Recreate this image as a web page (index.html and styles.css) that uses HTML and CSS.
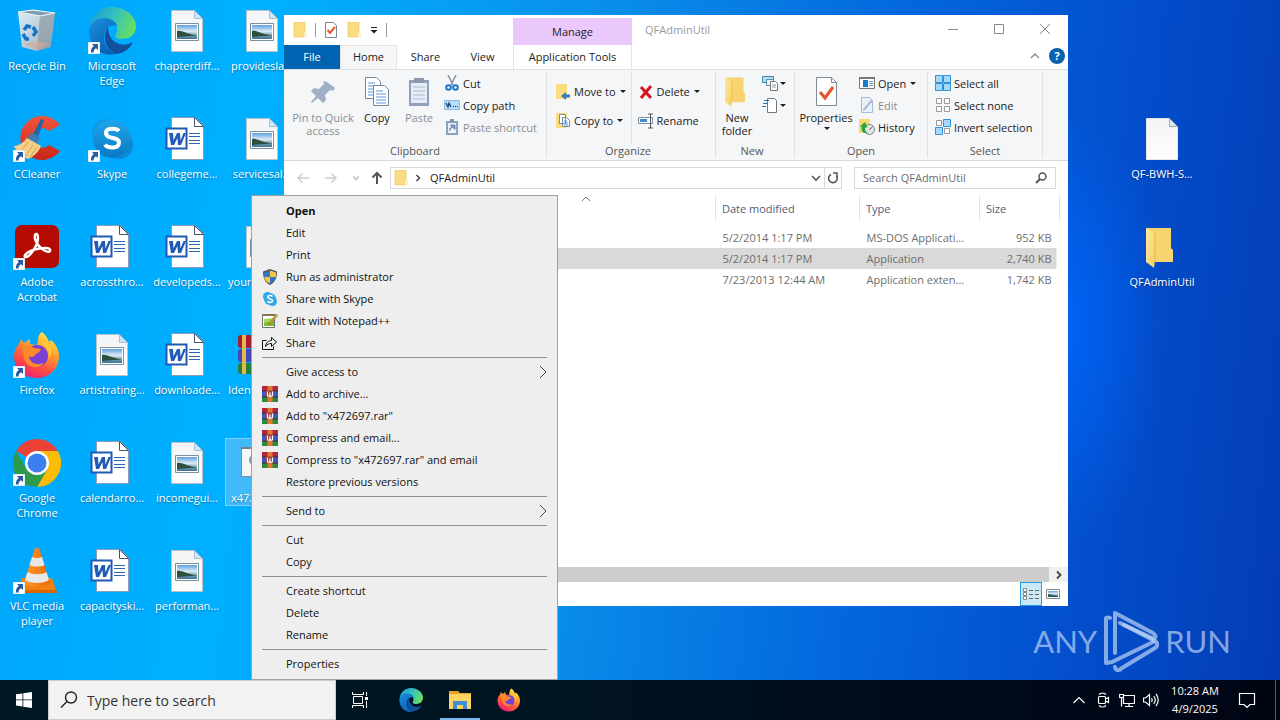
FILE: index.html
```html
<!DOCTYPE html>
<html lang="en">
<head>
    <meta charset="UTF-8">
    <title>QFAdminUtil</title>
    <meta name="viewport" content="width=device-width, initial-scale=1.0">
    <link rel="stylesheet" href="styles.css">
</head>
<body>

    <!-- Shared icons -->
    <svg class="sprite" aria-hidden="true">
        <defs>
            <linearGradient id="gEdgeTop" x1="0" y1="0.3" x2="1" y2="0.6"><stop offset="0" stop-color="#1a9fd8"/><stop offset=".5" stop-color="#35c1bd"/><stop offset="1" stop-color="#6be05c"/></linearGradient>
            <linearGradient id="gEdgeLeft" x1="0" y1="0" x2=".6" y2="1"><stop offset="0" stop-color="#1a8fdc"/><stop offset="1" stop-color="#0b60b8"/></linearGradient>
            <linearGradient id="gPage" x1="0" y1="0" x2="0" y2="1"><stop offset="0" stop-color="#f3f4f5"/><stop offset="1" stop-color="#fdfdfd"/></linearGradient>
            <linearGradient id="gSky" x1="0" y1="0" x2="0" y2="1"><stop offset="0" stop-color="#5f9fe0"/><stop offset=".45" stop-color="#dcecf6"/><stop offset=".7" stop-color="#7fa9b0"/><stop offset="1" stop-color="#3a6f9c"/></linearGradient>
            <linearGradient id="gFolder" x1="0" y1="0" x2="1" y2="1"><stop offset="0" stop-color="#ffe9a0"/><stop offset="1" stop-color="#f6cf66"/></linearGradient>
            <linearGradient id="gBin" x1="0" y1="0" x2="1" y2="1"><stop offset="0" stop-color="#eef2f5"/><stop offset="1" stop-color="#a9b3bb"/></linearGradient>
            <linearGradient id="gSkype" x1="0" y1="0" x2="0" y2="1"><stop offset="0" stop-color="#1fa6ec"/><stop offset="1" stop-color="#0a78c4"/></linearGradient>
            <linearGradient id="gFox" x1=".8" y1="0" x2=".3" y2="1"><stop offset="0" stop-color="#fff04a"/><stop offset=".35" stop-color="#ffa42a"/><stop offset=".7" stop-color="#ff4f40"/><stop offset="1" stop-color="#ec1c78"/></linearGradient>
            <linearGradient id="gCone" x1="0" y1="0" x2="1" y2="0"><stop offset="0" stop-color="#ff9a2e"/><stop offset="1" stop-color="#ea6b00"/></linearGradient>
            <linearGradient id="gRed" x1="0" y1="0" x2="0" y2="1"><stop offset="0" stop-color="#f0553c"/><stop offset="1" stop-color="#c9261a"/></linearGradient>
        </defs>

        <symbol id="shortcut" viewBox="0 0 12 12">
            <path d="M0 0h12v12H0z" fill="#fff" stroke="#9ec3dc" stroke-width=".6"/>
            <path d="M4 2h6v6L8 6.200C6.500 7 5.500 8.500 5.500 10.500H3C2.600 7.500 3.800 5.300 5.800 4z" fill="#2a5b9d"/>
        </symbol>

        <symbol id="bin" viewBox="0 0 48 48">
            <path d="M5 5l15-2L42 6l-4.500 34-14 4L9 40z" fill="url(#gBin)" opacity=".92"/>
            <path d="M27 9l15-3-4.500 34-14 4z" fill="#8f9ba4" opacity=".7"/>
            <path d="M5 5l15-2L42 6l-15 3z" fill="#7fa0b2" stroke="#f3f6f8" stroke-width="1.200"/>
            <path d="M11 37l12-3 13 3-12.500 6z" fill="#d9a98f" opacity=".6"/>
            <g fill="none" stroke="#1773c8" stroke-width="3.500"><path d="M11 23l3-4 4 1"/><path d="M20 20l3 5-3 4"/><path d="M16 32h-3l-3-5"/></g>
        </symbol>

        <symbol id="edge" viewBox="0 0 48 48">
            <path d="M1 24C1 10 11 0 24 0s24 9 24 19c0 9-7 13-14 13-6 0-8-2-6-5 1-2 1-3 1-5 0-6-6-10-12-10C9 12 2 17 1 24z" fill="url(#gEdgeTop)"/>
            <path d="M1 22c2-7 9-11 15-11 6 0 12 3 13 8-5-2-10 1-12 6-3 8 1 18 11 22C13 51 0 39 1 22z" fill="url(#gEdgeLeft)"/>
            <path d="M20 20c-6 9-3 22 8 27 8-1 13-5 16-10 1-2 0-2-1-1-10 5-23-1-23-16z" fill="#124f9c"/>
        </symbol>

        <symbol id="picture" viewBox="0 0 48 48">
            <path d="M8.500 3.500h23l8 8v33h-31z" fill="url(#gPage)" stroke="#b9c3ca"/>
            <path d="M31.500 3.500v8h8z" fill="#cfe6f5" stroke="#9db4c4" stroke-width=".8"/>
            <path d="M12.500 16.500h23v17h-23z" fill="#fff" stroke="#7c8f9c"/>
            <path d="M14 18h20v14H14z" fill="url(#gSky)"/>
            <path d="M14 24c5-1 8 3 20 4.500L14 30z" fill="#2e4f3d"/>
        </symbol>

        <symbol id="word" viewBox="0 0 48 48">
            <path d="M8.500 2.500h24l8 8v34h-32z" fill="#fff" stroke="#8b9db5"/>
            <path d="M31.500 2.500v9h9z" fill="#fff" stroke="#44546a"/>
            <path d="M26 18.500h11M26 21.500h11M26 25.500h11M26 28.500h11" stroke="#2b66b5" stroke-width="1.200"/>
            <path d="M3.500 13.500h20v20h-20z" fill="#fff" stroke="#1f5bb5" stroke-width="2"/>
            <path d="M6 18h4l.500 7.500L14 18h3l.500 7.500L20.500 18H23l-5 12h-3l-.600-7-3.400 7H8z" fill="#1f5bb5"/>
        </symbol>

        <symbol id="ccleaner" viewBox="0 0 48 48">
            <path d="M47 10A22 22 0 1 0 47 36l-11-6a10 10 0 1 1 0-14z" fill="url(#gRed)"/>
            <path d="M28 4l3 1-7 20-6-2z" fill="#28649f"/>
            <path d="M18 18l9 4-3 9-10-6z" fill="#3d7db5"/>
            <path d="M14 23l14 8c-2 6-8 11-13 13C10 42 3 36 1 31c5 0 10-4 13-8z" fill="#f5ce86"/>
            <path d="M15 27l-7 9M20 30l-7 11M24 32l-7 10" stroke="#d8a24c" fill="none"/>
        </symbol>

        <symbol id="skype" viewBox="0 0 48 48">
            <circle cx="18" cy="18" r="14" fill="#1593dd" opacity=".7"/><circle cx="31" cy="30" r="14" fill="#1279c6" opacity=".7"/>
            <circle cx="24" cy="24" r="19" fill="url(#gSkype)"/>
            <path d="M31 16c-2-2.500-13-4-13 2 0 7 13 3 13 9.500 0 7-12 5.500-14 2" fill="none" stroke="#fff" stroke-width="4"/>
        </symbol>

        <symbol id="acrobat" viewBox="0 0 48 48">
            <rect x="2" y="2" width="44" height="43" rx="7" fill="#b30b00"/>
            <path d="M13 34c-4 0 1-6 11-8s14-1 13 2c-2 3-12-3-15-12-1-6 3-7 3-1 0 7-8 19-12 19z" fill="none" stroke="#fff" stroke-width="2.400"/>
        </symbol>

        <symbol id="firefox" viewBox="0 0 48 48">
            <path d="M29 1c4 3 6 7 7 10l2-2c5 4 8 10 8 16 0 12-9 22-22 22S1 38 1 25c0-5 2-9 5-12l2-5 3 4 6-4v5l7 1 1-5c0-4 2-7 4-8z" fill="url(#gFox)"/>
            <circle cx="24" cy="25" r="11" fill="#7a3fd3"/>
            <path d="M9 14c5-1 9 1 12 3l7 1c-1 4-5 4-6 6-2 3-5 2-6 1 0 7 8 10 15 7-6 8-18 4-20-5-1-5 0-8-2-13z" fill="#ff8a2b"/>
            <path d="M28 13c8 3 9 11 7 16 6-7 3-16-2-20 0 2-2 3-5 4z" fill="#ffc63a"/>
        </symbol>

        <symbol id="chrome" viewBox="0 0 48 48">
            <path d="M24 24L3.200 12A24 24 0 0 1 44.800 12z" fill="#ea4335"/>
            <path d="M24 12h20.800A24 24 0 0 1 24 48l10.400-18z" fill="#fbbc05"/>
            <path d="M3.200 12A24 24 0 0 0 24 48l10.400-18L24 24 13.600 30z" fill="#2e9b4b"/>
            <circle cx="24" cy="24" r="12" fill="#fff"/><circle cx="24" cy="24" r="9.500" fill="#3c7ff0"/>
        </symbol>

        <symbol id="vlc" viewBox="0 0 48 48">
            <path d="M9 31h30l5 15H4z" fill="#f08010"/><path d="M5 43h38l1 3H4z" fill="#d96400"/>
            <path d="M22 1h4l11 35c-3 5-23 5-26 0z" fill="url(#gCone)"/>
            <path d="M19 10c3 1.500 7 1.500 10 0l2.500 8c-4 2-11 2-15 0zM14.500 25c5 3 14 3 19 0l2.500 8c-6 4-18 4-24 0z" fill="#e8e8e8"/>
        </symbol>

        <symbol id="folder" viewBox="0 0 48 48">
            <path d="M8 5h25v20l2 2v12H8z" fill="#f7d46f"/>
            <path d="M8 5l8 5v35l-8-6z" fill="url(#gFolder)"/>
            <path d="M16 10l2 1v26l-2 8z" fill="#e9bd4f" opacity=".6"/>
        </symbol>

        <symbol id="blank" viewBox="0 0 48 48">
            <path d="M8.500 3.500h23l8 8v33h-31z" fill="url(#gPage)" stroke="#e6e6e6"/>
            <path d="M31.500 3.500v8h8z" fill="#e3e7ea" stroke="#8a98a4" stroke-width=".8"/>
        </symbol>

        <symbol id="rar" viewBox="0 0 16 16">
            <path d="M0 0h16v5H0z" fill="#b5243f"/><path d="M0 5h16v6H0z" fill="#3d56b8"/><path d="M0 11h16v5H0z" fill="#2c8a3c"/>
            <path d="M0 5h16M0 11h16" stroke="#3d2f3a"/>
            <path d="M5.500 0h5v16h-5z" fill="#e0792b"/>
            <path d="M4 4.500h8v6.500H4z" fill="#9d3f48"/><path d="M5.500 5.500V9a1.200 1.200 0 0 0 2.500 0V6.500V9a1.200 1.200 0 0 0 2.500 0V5.500" fill="none" stroke="#fff" stroke-width="1.200"/>
        </symbol>

        <symbol id="books" viewBox="0 0 48 48">
            <rect x="0" y="4" width="47" height="13" rx="3" fill="#a81c35"/><rect x="0" y="18" width="47" height="13" rx="3" fill="#4547b8"/><rect x="0" y="32" width="47" height="11" rx="3" fill="#24803a"/>
            <path d="M4 4h4v39H4z" fill="#e3b94b"/>
        </symbol>

        <symbol id="smallFolder" viewBox="0 0 16 16">
            <path d="M2 0h11v10l1 1v4H2z" fill="#fbdc80" stroke="#eac25c" stroke-width=".6"/><path d="M12 10l2 1v4h-2z" fill="#fff3c4"/>
        </symbol>
        <symbol id="checkPage" viewBox="0 0 16 16">
            <path d="M2.500.500h8l3 3v12h-11z" fill="#fff" stroke="#7d8794"/><path d="M4.500 8l2.500 3 5-6" fill="none" stroke="#e25a2c" stroke-width="2"/>
        </symbol>
        <symbol id="chevron" viewBox="0 0 10 10"><path d="M1 3l4 4 4-4" fill="none" stroke="currentColor" stroke-width="1.600"/></symbol>
    </svg>

    <main class="desktop">
        <div class="icons">
            <button class="icon"><svg><use href="#bin"/></svg><span>Recycle Bin</span></button>
            <button class="icon app"><svg><use href="#edge"/></svg><svg class="arrow"><use href="#shortcut"/></svg><span>Microsoft Edge</span></button>
            <button class="icon"><svg><use href="#picture"/></svg><span>chapterdiff...</span></button>
            <button class="icon"><svg><use href="#picture"/></svg><span>providesla...</span></button>

            <button class="icon app first"><svg><use href="#ccleaner"/></svg><svg class="arrow"><use href="#shortcut"/></svg><span>CCleaner</span></button>
            <button class="icon app"><svg><use href="#skype"/></svg><svg class="arrow"><use href="#shortcut"/></svg><span>Skype</span></button>
            <button class="icon"><svg><use href="#word"/></svg><span>collegeme...</span></button>
            <button class="icon"><svg><use href="#picture"/></svg><span>servicesal...</span></button>
            <button class="icon far"><svg><use href="#blank"/></svg><span>QF-BWH-S...</span></button>

            <button class="icon app first"><svg><use href="#acrobat"/></svg><svg class="arrow"><use href="#shortcut"/></svg><span>Adobe Acrobat</span></button>
            <button class="icon"><svg><use href="#word"/></svg><span>acrossthro...</span></button>
            <button class="icon"><svg><use href="#word"/></svg><span>developeds...</span></button>
            <button class="icon covered"><svg><use href="#picture"/></svg><span>your</span></button>
            <button class="icon far"><svg><use href="#folder"/></svg><span>QFAdminUtil</span></button>

            <button class="icon app first"><svg><use href="#firefox"/></svg><svg class="arrow"><use href="#shortcut"/></svg><span>Firefox</span></button>
            <button class="icon"><svg><use href="#picture"/></svg><span>artistrating...</span></button>
            <button class="icon"><svg><use href="#word"/></svg><span>downloade...</span></button>
            <button class="icon covered"><svg><use href="#books"/></svg><span>Iden</span></button>

            <button class="icon app first"><svg><use href="#chrome"/></svg><svg class="arrow"><use href="#shortcut"/></svg><span>Google Chrome</span></button>
            <button class="icon"><svg><use href="#word"/></svg><span>calendarro...</span></button>
            <button class="icon"><svg><use href="#picture"/></svg><span>incomegui...</span></button>
            <button class="icon covered selected">
                <svg viewBox="0 0 48 48"><path d="M3.500 8.500h41v29h-41z" fill="#f7f7f7" stroke="#7d8c99"/><path d="M3 8h42v2H3z" fill="#73808c"/><circle cx="17" cy="21" r="5" fill="none" stroke="#8b98a3" stroke-width="2"/></svg>
                <span>x472697</span>
            </button>

            <button class="icon app first"><svg><use href="#vlc"/></svg><svg class="arrow"><use href="#shortcut"/></svg><span>VLC media player</span></button>
            <button class="icon"><svg><use href="#word"/></svg><span>capacityski...</span></button>
            <button class="icon"><svg><use href="#picture"/></svg><span>performan...</span></button>
        </div>

        <div class="watermark">
            <span>ANY</span>
            <svg viewBox="0 0 56 62" fill="none" stroke="currentColor" stroke-width="4" stroke-linejoin="round" stroke-linecap="round">
                <path d="M7 8a4 4 0 0 0-4 0v45l6-1 41-20"/><path d="M12 43V3l38 20c4 3 3 6-1 5L17 13"/><path d="M12 57c1 4 4 4 7 1l33-20c3-2 3-5 0-7L21 15"/>
            </svg>
            <span>RUN</span>
        </div>

        <section class="window">
            <header class="titlebar">
                <div class="quick">
                    <svg class="s16"><use href="#smallFolder"/></svg><i></i>
                    <button aria-label="Properties"><svg class="s16"><use href="#checkPage"/></svg></button>
                    <button aria-label="New folder"><svg class="s16"><use href="#smallFolder"/></svg></button>
                    <button aria-label="Customize toolbar"><svg viewBox="0 0 10 10" class="s10"><path d="M2 2.500h6" stroke="#222"/><path d="M1.500 5h7L5 8.500z" fill="#222"/></svg></button><i></i>
                </div>
                <div class="manage">Manage</div>
                <div class="title">QFAdminUtil</div>
                <div class="controls">
                    <button aria-label="Minimize"><svg viewBox="0 0 12 12"><path d="M1 6.500h10"/></svg></button>
                    <button aria-label="Maximize"><svg viewBox="0 0 12 12"><path d="M1.500 1.500h9v9h-9z"/></svg></button>
                    <button aria-label="Close"><svg viewBox="0 0 12 12"><path d="M1 1l10 10M11 1L1 11"/></svg></button>
                </div>
            </header>

            <nav class="tabs">
                <button class="file">File</button>
                <button class="active">Home</button>
                <button>Share</button>
                <button>View</button>
                <button class="tools">Application Tools</button>
                <button class="collapse" aria-label="Collapse ribbon"><svg viewBox="0 0 10 10" class="s10"><path d="M1 7l4-4 4 4" fill="none" stroke="#888" stroke-width="1.300"/></svg></button>
                <button class="help" aria-label="Help">?</button>
            </nav>

            <div class="ribbon">
                <div class="group clipboard">
                    <div class="tools-row">
                        <button class="big pin off"><svg viewBox="0 0 32 32"><path d="M20 6l8 6-2 3-3-1-5 5 1 5-3 3-5-5-6 5-1-1 5-6-5-5 3-3 5 1 5-5-1-3z" fill="#9fb0c6"/></svg>Pin to Quick access</button>
                        <button class="big copy"><svg viewBox="0 0 32 32"><g fill="#fff" stroke="#76879c"><path d="M4.500 1.500h11l4 4v17h-15z"/><path d="M12.500 9.500h11l4 4v16h-15z"/></g><path d="M7 7h7M7 10h5M7 13h5M7 16h5M7 19h5M15 15h7M15 18h10M15 21h10M15 24h10M15 27h10" stroke="#5a9be0"/></svg>Copy</button>
                        <button class="big paste off"><svg viewBox="0 0 32 32"><path d="M6 4h20v26H6z" fill="#8ea0bd"/><path d="M8 7h16v20H8z" fill="#e6ecf6"/><path d="M11 2h10v5H11z" fill="#8b97a8"/><path d="M10 11h12M10 15h12M10 19h12M10 23h12" stroke="#aebcd2"/></svg>Paste</button>
                        <div class="list">
                            <button><svg viewBox="0 0 16 16"><path d="M4 0l5 10M12 0L7 10" stroke="#8592a2" stroke-width="1.500"/><g fill="none" stroke="#1b78c8" stroke-width="2"><circle cx="4.500" cy="12.500" r="2.300"/><circle cx="11.500" cy="12.500" r="2.300"/></g></svg>Cut</button>
                            <button><svg viewBox="0 0 16 16"><path d="M.500 3.500h15v9H.500z" fill="#b8dcfa" stroke="#8abde8"/><path d="M2 6l2 4 1-4 2 4M9 9.500h1M11 9.500h1M13 9.500h1" fill="none" stroke="#15416e" stroke-width="1.200"/></svg>Copy path</button>
                            <button class="off"><svg viewBox="0 0 16 16"><path d="M2 2h12v14H2z" fill="#8da2c0"/><path d="M4 4h8v10H4z" fill="#eef3fa"/><path d="M6 0h4v3H6z" fill="#8793a5"/><path d="M5.500 12c0-3 1-4 3-4M6.500 6h4.500v4.500z" stroke="#6e8cb5" fill="#6e8cb5"/></svg>Paste shortcut</button>
                        </div>
                    </div>
                    <div class="caption">Clipboard</div>
                </div>

                <div class="group organize">
                    <div class="tools-row">
                        <div class="list roomy">
                            <button><svg viewBox="0 0 16 16"><path d="M1 0h11v9l1 1v5H1z" fill="#fbdc80"/><path d="M15 10.500h-4V8l-5 4 5 4v-2.500h4z" fill="#2d7cc4"/></svg>Move to<b></b></button>
                            <button><svg viewBox="0 0 16 16"><path d="M1 0h11v15H1z" fill="#fbdc80"/><path d="M4.500 1.500h6v9h-6zM7.500 4.500h4l3 3v6h-7z" fill="#fff" stroke="#7889a0"/><path d="M9 8h3M9 10h4M9 12h4" stroke="#4e93d8"/></svg>Copy to<b></b></button>
                        </div>
                        <div class="list roomy split">
                            <button><svg viewBox="0 0 16 16"><path d="M3 3l10 11M13 2L3 14" stroke="#d8151c" stroke-width="3"/></svg>Delete<b></b></button>
                            <button><svg viewBox="0 0 16 16"><path d="M.500 4.500h14v6H.500z" fill="#fff" stroke="#7f93a8"/><path d="M2 6h7v3H2z" fill="#3a8ed8"/><path d="M10 1h2.500H15M12.500 1v14M10 15h5" fill="none" stroke="#555"/></svg>Rename</button>
                        </div>
                    </div>
                    <div class="caption">Organize</div>
                </div>

                <div class="group new">
                    <div class="tools-row">
                        <button class="big folder"><svg viewBox="6 3 36 44"><use href="#folder" width="48" height="48"/></svg>New folder</button>
                        <div class="list icon-only">
                            <button aria-label="New item"><svg viewBox="0 0 16 16"><path d="M.500 1.500h11v6H.500z" fill="#b8dcf4" stroke="#3f86b0"/><path d="M4.500 4.500h7v6h-7z" fill="#e9f3fa" stroke="#5e8eac"/><path d="M8.500 6.500h5l2 2v7h-7z" fill="#fff" stroke="#777"/><path d="M10 10h4M10 12h4" stroke="#999"/></svg><b></b></button>
                            <button aria-label="Easy access"><svg viewBox="0 0 16 16"><path d="M5.500 1.500h7l2 2v12h-9z" fill="#fff" stroke="#777"/><path d="M2 3.500h5M1 6.500h5M0 9.500h4" stroke="#2b78bd"/></svg><b></b></button>
                        </div>
                    </div>
                    <div class="caption">New</div>
                </div>

                <div class="group open">
                    <div class="tools-row">
                        <button class="big props"><svg viewBox="0 0 32 32"><path d="M6.500 1.500h15l5 5v23h-20z" fill="#fff" stroke="#808a98"/><path d="M21.500 1.500v5h5" fill="none" stroke="#808a98"/><path d="M10 16l5 6 8-11" fill="none" stroke="#e2562c" stroke-width="3"/></svg>Properties<b></b></button>
                        <div class="list">
                            <button><svg viewBox="0 0 16 16"><path d="M.500 2.500h15v11H.500z" fill="#fff" stroke="#777"/><path d="M0 2h16v2H0z" fill="#777"/><path d="M4 5h5v7H4z" fill="#1979ca"/><path d="M10 6.500h4M10 8.500h4M10 10.500h4" stroke="#6d9fc8"/></svg>Open<b></b></button>
                            <button class="off"><svg viewBox="0 0 16 16"><path d="M2.500.500h8l3 3v12h-11z" fill="#eaf0f8" stroke="#a7b7cf"/><path d="M14 4l-8 9-2 1 .500-2.500L12 3z" fill="#aabbd6"/></svg>Edit</button>
                            <button><svg viewBox="0 0 16 16"><path d="M0 0h11v14H0z" fill="#f8d96c"/><circle cx="10.500" cy="10.500" r="5" fill="#e3e6e4" stroke="#7b858a"/><path d="M10.500 10.500l3-2.500" fill="none" stroke="#555"/><path d="M9 14C4 15 1.500 11.500 3 8L1 7.500 6 3l2.500 5.500L6 8.500C5.500 11 6.500 13 9 14z" fill="#27a54a"/></svg>History</button>
                        </div>
                    </div>
                    <div class="caption">Open</div>
                </div>

                <div class="group select">
                    <div class="tools-row">
                        <div class="list">
                            <button><svg viewBox="0 0 16 16"><path d="M.500.500h7v7h-7zM8.500.500h7v7h-7zM.500 8.500h7v7h-7zM8.500 8.500h7v7h-7z" fill="#a6d8fa" stroke="#2f93dc"/></svg>Select all</button>
                            <button><svg viewBox="0 0 16 16"><path d="M1.500 1.500h5v5h-5zM9.500 1.500h5v5h-5zM1.500 9.500h5v5h-5zM9.500 9.500h5v5h-5z" fill="#fff" stroke="#999"/></svg>Select none</button>
                            <button><svg viewBox="0 0 16 16"><path d="M1.500 1.500h5v5h-5zM9.500 9.500h5v5h-5z" fill="#fff" stroke="#999"/><path d="M8.500.500h7v7h-7zM.500 8.500h7v7h-7z" fill="#a6d8fa" stroke="#2f93dc"/></svg>Invert selection</button>
                        </div>
                    </div>
                    <div class="caption">Select</div>
                </div>
            </div>

            <div class="address-row">
                <div class="nav">
                    <button aria-label="Back"><svg viewBox="0 0 14 14"><path d="M13 7H2M6.500 2.500L2 7l4.500 4.500"/></svg></button>
                    <button aria-label="Forward"><svg viewBox="0 0 14 14"><path d="M1 7h11M7.500 2.500L12 7l-4.500 4.500"/></svg></button>
                    <button aria-label="Recent"><svg class="s10" viewBox="0 0 10 10"><path d="M3 4l2 2 2-2"/></svg></button>
                    <button class="up" aria-label="Up"><svg viewBox="0 0 14 14"><path d="M7 13V2M2.500 6.500L7 2l4.500 4.500"/></svg></button>
                </div>
                <div class="address">
                    <svg class="s16"><use href="#smallFolder"/></svg>
                    <svg class="crumb" viewBox="0 0 6 8"><path d="M1.500 1l3 3-3 3" fill="none" stroke="#444" stroke-width="1.500"/></svg>
                    <span>QFAdminUtil</span>
                    <button aria-label="Previous locations"><svg class="s10"><use href="#chevron"/></svg></button>
                    <button class="refresh" aria-label="Refresh"><svg viewBox="0 0 12 12" class="s12"><path d="M4 2.500A4.300 4.300 0 1 0 9.500 4" fill="none" stroke="#555" stroke-width="1.600"/><path d="M6 1h4v4" fill="none" stroke="#555" stroke-width="1.500"/></svg></button>
                </div>
                <div class="search">
                    <input type="text" placeholder="Search QFAdminUtil" aria-label="Search QFAdminUtil">
                    <svg viewBox="0 0 12 12" class="s12"><circle cx="7.500" cy="4.500" r="3.500" fill="none" stroke="#555" stroke-width="1.500"/><path d="M5 7l-4 4" stroke="#555" stroke-width="2"/></svg>
                </div>
            </div>

            <div class="files">
                <svg class="sort s10" viewBox="0 0 10 10"><path d="M1 7l4-4 4 4" fill="none" stroke="#777"/></svg>
                <table>
                    <colgroup><col><col class="c-date"><col class="c-type"><col class="c-size"></colgroup>
                    <thead>
                        <tr><td></td><th>Date modified</th><th>Type</th><th>Size</th></tr>
                    </thead>
                    <tbody>
                        <tr><td></td><td>5/2/2014 1:17 PM</td><td>MS-DOS Applicati...</td><td>952 KB</td></tr>
                        <tr class="current"><td></td><td>5/2/2014 1:17 PM</td><td>Application</td><td>2,740 KB</td></tr>
                        <tr><td></td><td>7/23/2013 12:44 AM</td><td>Application exten...</td><td>1,742 KB</td></tr>
                    </tbody>
                </table>
            </div>

            <div class="scrollbar"><div class="thumb"></div><button aria-label="Scroll right"><svg class="s10" viewBox="0 0 10 10"><path d="M3 1.500L6.500 5 3 8.500" fill="none" stroke="#444" stroke-width="1.800"/></svg></button></div>

            <footer class="status">
                <button class="on" aria-label="Details view"><svg viewBox="0 0 16 14"><path d="M.500 1.500h3v3h-3zM.500 5.500h3v3h-3zM.500 9.500h3v3h-3z" fill="#fff" stroke="#888"/><path d="M6 3.500h4M12 3.500h4M6 7.500h4M12 7.500h4M6 11.500h4M12 11.500h4" stroke="#666"/></svg></button>
                <button aria-label="Large icons view"><svg viewBox="0 0 16 14"><path d="M1.500 2.500h13v9h-13z" fill="#fff" stroke="#888"/><path d="M3 4h10v6H3z" fill="url(#gSky)"/><path d="M3 7l10 2v1H3z" fill="#2b5560"/></svg></button>
            </footer>
        </section>

        <div class="menu" role="menu">
            <button role="menuitem" class="default"><i></i><span>Open</span></button>
            <button role="menuitem"><i></i><span>Edit</span></button>
            <button role="menuitem"><i></i><span>Print</span></button>
            <button role="menuitem"><i><svg viewBox="0 0 16 16"><path d="M8 0l7 2.500C15 9 13 13.500 8 16 3 13.500 1 9 1 2.500z" fill="#555"/><path d="M8 1.500V8H2.200C2 6.500 2 5 2 3.500z" fill="#2f78c4"/><path d="M8 1.500l6 2C14 5 14 6.500 13.800 8H8z" fill="#f5c944"/><path d="M2.200 8H8v6.500C4.500 13 2.800 11 2.200 8z" fill="#f5c944"/><path d="M8 8h5.800c-.600 3-2.300 5-5.800 6.500z" fill="#2f78c4"/></svg></i><span>Run as administrator</span></button>
            <button role="menuitem"><i><svg viewBox="0 0 16 16"><circle cx="5.500" cy="5.500" r="4.500" fill="#2fa9e8"/><circle cx="10.500" cy="10.500" r="4.500" fill="#2fa9e8"/><circle cx="8" cy="8" r="6" fill="#2fa9e8"/><path d="M10.500 5.500c-1-1.300-4.800-1.300-4.800.600 0 2.400 4.800 1.200 4.800 3.700 0 2.200-4.200 2-5 .400" fill="none" stroke="#fff" stroke-width="1.500"/></svg></i><span>Share with Skype</span></button>
            <button role="menuitem"><i><svg viewBox="0 0 16 16"><path d="M.500 1.500h12v13H.500z" fill="#fff" stroke="#6b756b"/><path d="M1 1h11v2H1z" fill="#8c6f4d"/><path d="M2 6l10-1v8H2z" fill="#a4d65a"/><path d="M2 10l10-3v6H2z" fill="#7cbf2c"/><path d="M14 1l1.500 1.500L9 11l-2 1 .500-2z" fill="#d8a53c" stroke="#7a5a2a" stroke-width=".5"/></svg></i><span>Edit with Notepad++</span></button>
            <button role="menuitem"><i><svg viewBox="0 0 16 16"><path d="M4.500 5.500h-4v9h11v-3M3.500 11.500c.500-4 3-6 6-6v-3l5 4.500-5 4.500V8.500c-3 0-4.500 1-6 3z" fill="none" stroke="#111"/></svg></i><span>Share</span></button>
            <hr>
            <button role="menuitem"><i></i><span>Give access to</span><svg class="more" viewBox="0 0 8 14"><path d="M1 1l6 6-6 6"/></svg></button>
            <button role="menuitem"><i><svg><use href="#rar"/></svg></i><span>Add to archive...</span></button>
            <button role="menuitem"><i><svg><use href="#rar"/></svg></i><span>Add to "x472697.rar"</span></button>
            <button role="menuitem"><i><svg><use href="#rar"/></svg></i><span>Compress and email...</span></button>
            <button role="menuitem"><i><svg><use href="#rar"/></svg></i><span>Compress to "x472697.rar" and email</span></button>
            <button role="menuitem"><i></i><span>Restore previous versions</span></button>
            <hr>
            <button role="menuitem"><i></i><span>Send to</span><svg class="more" viewBox="0 0 8 14"><path d="M1 1l6 6-6 6"/></svg></button>
            <hr>
            <button role="menuitem"><i></i><span>Cut</span></button>
            <button role="menuitem"><i></i><span>Copy</span></button>
            <hr>
            <button role="menuitem"><i></i><span>Create shortcut</span></button>
            <button role="menuitem"><i></i><span>Delete</span></button>
            <button role="menuitem"><i></i><span>Rename</span></button>
            <hr>
            <button role="menuitem"><i></i><span>Properties</span></button>
        </div>
    </main>

    <footer class="taskbar">
        <button class="start" aria-label="Start"><svg viewBox="0 0 16 16"><path d="M0 2.300L6.500 1.400v6.100H0zM7.300 1.300L16 0v7.500H7.300zM0 8.300h6.500v6.200L0 13.600zM7.300 8.300H16V16l-8.700-1.300z" fill="#fff"/></svg></button>
        <div class="task-search">
            <svg viewBox="0 0 18 18"><circle cx="11" cy="6.500" r="5.500" fill="none" stroke="#222" stroke-width="1.400"/><path d="M7 10.500l-6 6" stroke="#222" stroke-width="1.400"/></svg>
            <input type="text" placeholder="Type here to search" aria-label="Type here to search">
        </div>
        <div class="apps">
            <button aria-label="Task view"><svg class="view" viewBox="0 0 18 16"><path d="M2.500 4.500h9v7h-9zM1.500 0v2.500h11V0M1.500 16v-2.500h11V16M15.500 0v4M15.500 9v7" fill="none" stroke="#fff"/><path d="M14 5h3v3h-3z" fill="#fff"/></svg></button>
            <button aria-label="Microsoft Edge"><svg><use href="#edge"/></svg></button>
            <button class="running" aria-label="File Explorer"><svg viewBox="0 0 24 24"><path d="M1 3h9l2 2h11v16H1z" fill="#e8a21f"/><path d="M1 6h22v15H1z" fill="#fcd462"/><path d="M5 13h14v8h-4v-4H9v4H5z" fill="#3f8fd2"/></svg></button>
            <button aria-label="Firefox"><svg><use href="#firefox"/></svg></button>
        </div>
        <div class="tray">
            <svg viewBox="0 0 16 16"><path d="M2.500 11L8 5.500l5.500 5.500"/></svg>
            <svg viewBox="0 0 16 16"><rect x="3.500" y="4.500" width="7" height="7" rx="1"/><path d="M10.500 7l3-1.500v5l-3-1.500M4 2.500c2-2 5-2 7 0M4 13.500c2 2 5 2 7 0"/></svg>
            <svg viewBox="0 0 16 16"><path d="M4.500 3.500h11v8h-11zM10 11.500v3M6 14.500h8M.500 2.500h4v3h-4zM2.500 5.500v9"/></svg>
            <svg viewBox="0 0 16 16"><path d="M.500 6v4h2l4 3.500v-11L2.500 6zM8.500 6c1 1.500 1 2.500 0 4M10.700 4c2 2.500 2 5.500 0 8M13 2c3 3.500 3 8.500 0 12"/></svg>
        </div>
        <div class="clock">10:28 AM<br>4/9/2025</div>
        <button class="notify" aria-label="Notifications"><svg viewBox="0 0 18 18"><path d="M1.500 2.500h15v11H12l-3 3-3-3H1.500z"/></svg></button>
        <div class="peek"></div>
    </footer>

</body>
</html>
```
FILE: styles.css
```css
* {
    box-sizing: border-box;
}

body {
    margin: 0;
    height: 100vh;
    display: flex;
    flex-direction: column;
    overflow: hidden;
    font-family: "Open Sans", "Noto Sans", sans-serif;
    font-size: 11px;
    color: #222;
}

button {
    background: none;
    border: none;
    padding: 0;
    font: inherit;
    color: inherit;
    cursor: default;
}

input {
    border: none;
    background: none;
    padding: 0;
    min-width: 0;
    flex: 1;
    font: inherit;
    outline: none;
}

.sprite {
    position: absolute;
    width: 0;
    height: 0;
}

.s10 { width: 10px; height: 10px; }
.s12 { width: 12px; height: 12px; }
.s16 { width: 16px; height: 16px; }

/* Desktop */
.desktop {
    position: relative;
    flex: 1;
    background:
        radial-gradient(ellipse 100px 220px at 83% 48%, rgba(0, 104, 255, 0.8), rgba(0, 104, 255, 0)),
        linear-gradient(96deg, #00a6fb 0%, #00b0ff 20%, #0a8eea 45%, #0366dc 68%, #034fcd 84%, #033cb4 100%);
}

.icons {
    display: grid;
    grid-template-columns: repeat(auto-fill, 75px);
    grid-auto-rows: 108px;
}

.icon {
    position: relative;
    align-self: start;
    justify-self: start;
    width: 74px;
    margin-top: 6px;
    padding: 1px 0;
    display: flex;
    flex-direction: column;
    align-items: center;
    color: #fff;
    line-height: 15px;
    text-shadow: 0 1px 2px rgba(0, 0, 0, 0.4);
}

.icon svg {
    width: 48px;
    height: 48px;
    flex: none;
}

.icon .arrow {
    position: absolute;
    left: 13px;
    top: 36px;
    width: 12px;
    height: 12px;
}

.icon span {
    margin-top: 3px;
    max-width: 70px;
}

.icon.first { grid-column: 1; }
.icon.far { grid-column: 16; }

.icon.covered span {
    align-self: flex-start;
    padding-left: 3px;
}

.icon.selected {
    background: rgba(160, 205, 240, 0.4);
    outline: 1px solid rgba(150, 210, 250, 0.8);
    outline-offset: -1px;
}

.icon.selected span {
    padding-left: 6px;
}

.watermark {
    position: absolute;
    right: 49px;
    bottom: 8px;
    display: flex;
    align-items: center;
    gap: 6px;
    color: rgba(190, 212, 245, 0.7);
    font-family: Lato, sans-serif;
    font-size: 31px;
    line-height: 62px;
}

.watermark svg {
    width: 56px;
    height: 62px;
}

/* Explorer window */
.window {
    position: absolute;
    left: 284px;
    right: 212px;
    top: 15px;
    bottom: 74px;
    display: flex;
    flex-direction: column;
    background: #fff;
}

.titlebar {
    display: flex;
    height: 30px;
}

.quick {
    width: 229px;
    display: flex;
    align-items: center;
    gap: 7px;
    padding-left: 8px;
}

.quick svg {
    display: block;
}

.quick i {
    width: 1px;
    height: 14px;
    background: #999;
}

.manage {
    width: 119px;
    margin-top: 3px;
    background: #eac8fb;
    text-align: center;
    line-height: 28px;
}

.title {
    flex: 1;
    padding-left: 13px;
    line-height: 30px;
    color: #999;
}

.controls {
    display: flex;
}

.controls button {
    width: 46px;
}

.controls svg {
    width: 12px;
    height: 12px;
    fill: none;
    stroke: #888;
}

.tabs {
    display: flex;
    height: 24px;
}

.tabs button {
    width: 57px;
    padding-bottom: 2px;
}

.tabs .file {
    width: 56px;
    background: #0063b1;
    color: #fff;
}

.tabs .active {
    background: #f5f6f7;
    border: 1px solid #e4e5e6;
    border-bottom: none;
}

.tabs .tools {
    width: 119px;
    margin-left: 2px;
    border: solid #e4e5e6;
    border-width: 0 1px;
}

.tabs .collapse {
    margin-left: auto;
    width: 24px;
}

.tabs .help {
    width: 16px;
    height: 16px;
    margin: 3px 3px 0 2px;
    padding: 0;
    border-radius: 50%;
    background: #0a5fb0;
    color: #fff;
    font-weight: bold;
    line-height: 16px;
}

.ribbon {
    display: flex;
    height: 92px;
    background: #f5f6f7;
    border-top: 1px solid #dfe0e1;
    border-bottom: 1px solid #d8d9da;
}

.group {
    display: flex;
    flex-direction: column;
    margin: 2px 0;
    border-right: 1px solid #e0e1e3;
}

.clipboard { width: 263px; }
.organize { width: 169px; }
.new { width: 79px; }
.open { width: 133px; }
.select { width: 115px; }

.tools-row {
    display: flex;
    flex: 1;
}

.caption {
    text-align: center;
    line-height: 14px;
    color: #555;
}

.organize .caption,
.new .caption {
    padding-right: 6px;
}

.big {
    display: flex;
    flex-direction: column;
    align-items: center;
    line-height: 13px;
    padding-top: 4px;
}

.big svg {
    width: 32px;
    height: 32px;
    flex: none;
    margin-bottom: 3px;
}

.pin { width: 70px; margin-left: 4px; }
.copy { width: 38px; }
.paste { width: 46px; }
.folder { width: 42px; }
.props { width: 56px; margin-left: 3px; }

.off {
    color: #8b8d90;
}

.list {
    display: flex;
    flex-direction: column;
    padding-left: 2px;
}

.list button {
    display: flex;
    align-items: center;
    height: 22px;
    gap: 3px;
    white-space: nowrap;
}

.list svg {
    width: 16px;
    height: 16px;
}

.roomy {
    padding: 5px 0 0 8px;
}

.roomy button {
    height: 29px;
}

.split {
    margin-left: 5px;
    padding-left: 6px;
    border-left: 1px solid #e0e1e3;
}

.icon-only { padding-left: 4px; }
.icon-only button { gap: 1px; }
.open .list { padding-left: 5px; }
.select .list { padding-left: 7px; }

/* drop-down arrow */
.ribbon b {
    border: 3px solid transparent;
    border-top-color: #222;
    border-bottom: none;
    margin-left: 1px;
}

.big b {
    margin-top: 3px;
}

.address-row {
    display: flex;
    align-items: center;
    height: 34px;
    padding-right: 12px;
}

.nav {
    display: flex;
    width: 106px;
    padding-left: 5px;
}

.nav button {
    width: 28px;
    height: 22px;
    display: flex;
    align-items: center;
    justify-content: center;
}

.nav button:nth-child(n+3) {
    width: 21px;
}

.nav svg {
    width: 14px;
    height: 14px;
    fill: none;
    stroke: #ccc;
    stroke-width: 1.5;
}

.nav .up svg {
    stroke: #555;
    stroke-width: 2;
}

.address, .search {
    display: flex;
    align-items: center;
    height: 22px;
    border: 1px solid #d9d9d9;
}

.address {
    flex: 1;
    padding-left: 2px;
}

.crumb {
    width: 6px;
    height: 8px;
    margin: 0 9px 0 6px;
}

.address span {
    flex: 1;
    padding-bottom: 1px;
}

.address button {
    width: 17px;
    height: 100%;
    display: flex;
    align-items: center;
    justify-content: center;
    color: #555;
}

.address .refresh {
    border-left: 1px solid #d9d9d9;
}

.search {
    width: 202px;
    margin-left: 12px;
    padding: 0 8px;
}

.search input {
    padding-bottom: 1px;
}

.search input::placeholder {
    color: #6d6d6d;
}

.files {
    position: relative;
    flex: 1;
    padding-right: 8px;
}

.sort {
    position: absolute;
    left: 297px;
    top: -1px;
}

table {
    width: 100%;
    table-layout: fixed;
    border-collapse: collapse;
}

.c-date { width: 144px; }
.c-type { width: 120px; }
.c-size { width: 80px; }

th {
    height: 26px;
    padding: 0 6px;
    font-weight: normal;
    text-align: left;
    color: #4c607a;
    border: solid #e5e5e5;
    border-width: 0 1px;
}

thead::after {
    content: "";
    display: block;
    height: 6px;
}

tbody td {
    height: 21px;
    padding: 0 7px;
    color: #6d6d6d;
    white-space: nowrap;
}

tbody td:last-child {
    text-align: right;
    padding-right: 8px;
}

.current {
    background: linear-gradient(#d9d9d9, #d9d9d9) no-repeat 0 0 / calc(100% - 4px) 100%;
}

.scrollbar {
    display: flex;
    height: 15px;
    background: #f0f0f0;
}

.thumb {
    flex: 1;
    background: #cdcdcd;
}

.scrollbar button {
    width: 19px;
    display: flex;
    align-items: center;
    justify-content: center;
}

.status {
    display: flex;
    justify-content: flex-end;
    height: 24px;
    padding-right: 4px;
}

.status button {
    width: 22px;
    height: 24px;
    display: flex;
    align-items: center;
    justify-content: center;
}

.status svg {
    width: 16px;
    height: 14px;
}

.status .on {
    background: #cbe8f6;
    border: 1px solid #26a0da;
}

/* Context menu */
.menu {
    position: absolute;
    left: 251px;
    top: 195px;
    width: 307px;
    padding: 4px 0;
    background: #eee;
    border: 1px solid #a0a0a0;
    color: #111;
}

.menu button {
    display: flex;
    align-items: center;
    width: 100%;
    height: 22px;
    padding: 0 10px;
    white-space: nowrap;
}

.menu span {
    padding-bottom: 2px;
}

.menu .default {
    font-weight: bold;
}

.menu i {
    width: 24px;
    height: 16px;
}

.menu i svg {
    display: block;
    width: 16px;
    height: 16px;
}

.menu .more {
    width: 8px;
    height: 14px;
    margin-left: auto;
    fill: none;
    stroke: #444;
}

.menu hr {
    margin: 3px 10px;
    border: none;
    border-top: 1px solid #919191;
}

/* Taskbar */
.taskbar {
    display: flex;
    height: 40px;
    background: linear-gradient(90deg, #001822, #001420 45%, #000a18 75%, #000514);
    color: #fff;
}

.taskbar button {
    display: flex;
    align-items: center;
    justify-content: center;
    width: 48px;
}

.start svg {
    width: 16px;
    height: 16px;
}

.task-search {
    display: flex;
    align-items: center;
    width: 288px;
    padding: 0 11px;
    gap: 9px;
    background: #f2f2f2;
    border: 1px solid #ccc;
    font-size: 14px;
}

.task-search svg {
    width: 18px;
    height: 18px;
}

.task-search input::placeholder {
    color: #333;
}

.apps {
    display: flex;
    gap: 1px;
}

.apps button:first-child {
    margin-right: 2px;
}

.apps svg {
    width: 24px;
    height: 24px;
}

.apps .view {
    width: 18px;
    height: 16px;
}

.apps .running {
    background: linear-gradient(#76b9ed, #76b9ed) no-repeat 50% 100% / 40px 2px;
}

.tray {
    display: flex;
    align-items: center;
    gap: 8px;
    margin: 0 8px 0 auto;
}

.tray svg, .notify svg {
    width: 16px;
    height: 16px;
    fill: none;
    stroke: #fff;
    stroke-width: 1.2;
}

.notify svg {
    width: 18px;
    height: 18px;
}

.clock {
    width: 56px;
    text-align: center;
    line-height: 18px;
    padding-top: 2px;
}

.peek {
    width: 5px;
    margin-left: 4px;
    border-left: 1px solid #556;
}
```
